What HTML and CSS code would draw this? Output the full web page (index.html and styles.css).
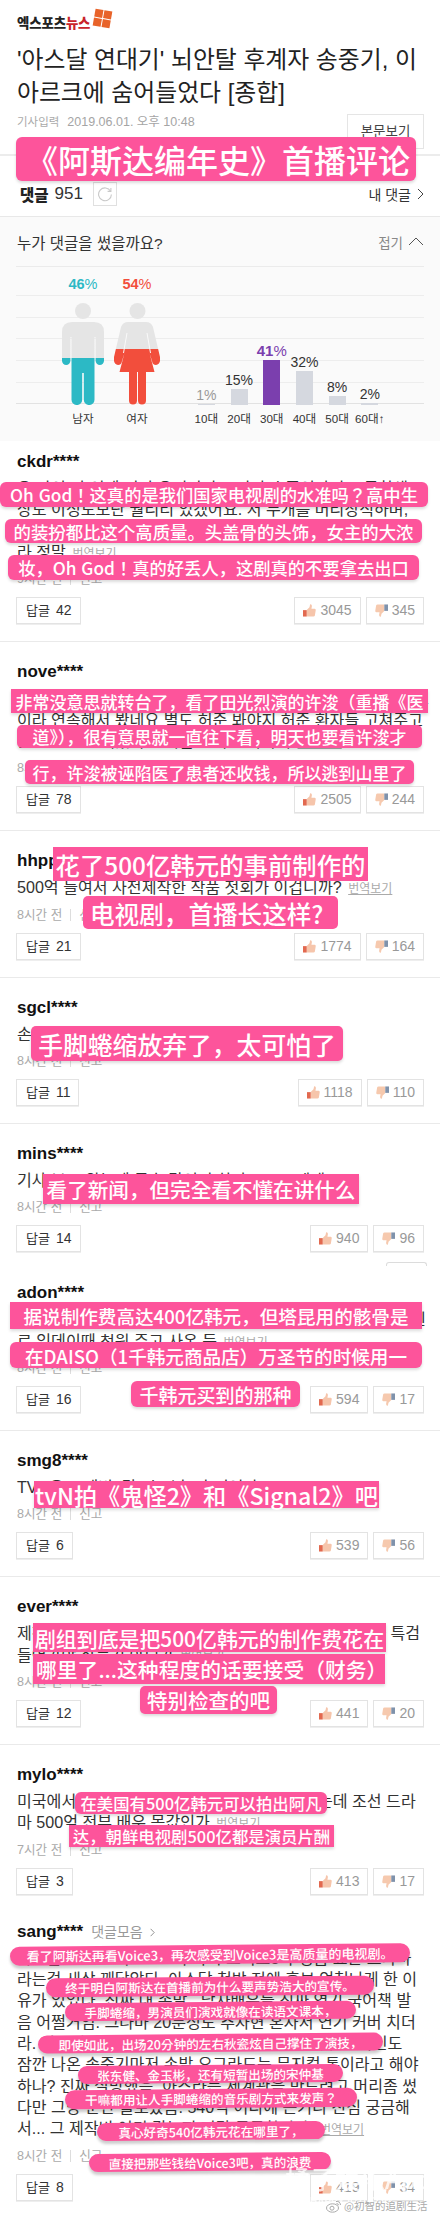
FILE: index.html
```html
<!DOCTYPE html>
<html lang="ko">
<head>
<meta charset="utf-8">
<title>댓글</title>
<link rel="stylesheet" href="styles.css">
</head>
<body>
<svg class="defs" width="0" height="0" aria-hidden="true">
  <defs>
    <linearGradient id="manFill" gradientUnits="userSpaceOnUse" x1="0" y1="0" x2="0" y2="102">
      <stop offset="0.54" stop-color="#e5e5e5"/><stop offset="0.54" stop-color="#2cb9c5"/>
    </linearGradient>
    <linearGradient id="womanFill" gradientUnits="userSpaceOnUse" x1="0" y1="0" x2="0" y2="102">
      <stop offset="0.45" stop-color="#e5e5e5"/><stop offset="0.45" stop-color="#f24e3c"/>
    </linearGradient>
    <symbol id="thumbUp" viewBox="0 0 14 14">
      <path d="M4 6.5 7 3.6 7.7.4Q9.6.2 9.6 2.2L9.1 5H12.6Q14 5.2 13.7 6.6L12.8 12.3Q12.5 13.5 11.3 13.5H4Z" fill="#f6c5ab"/>
      <rect x="0" y="6.6" width="4" height="6.9" fill="#e2694f"/>
    </symbol>
    <symbol id="thumbDown" viewBox="0 0 14 14">
      <path d="M10 7.5 7 10.4 6.3 13.6Q4.4 13.8 4.4 11.8L4.9 9H1.4Q0 8.8.3 7.4L1.2 1.7Q1.5.5 2.7.5H10Z" fill="#f6c9ae"/>
      <rect x="10" y=".5" width="4" height="6.9" fill="#7f92ab"/>
    </symbol>
  </defs>
</svg>
<div class="page">
  <header class="head">
    <div class="logo">
      <span class="logo-text">엑스포츠<em>뉴스</em></span>
      <span class="logo-mark"><i></i><i></i><i></i><i></i></span>
    </div>
    <h1 class="title">'아스달 연대기' 뇌안탈 후계자 송중기, 이<br>아르크에 숨어들었다 [종합]</h1>
    <div class="meta-row">
      <p class="stamp"><span class="stamp-label">기사입력</span><span class="stamp-date">2019.06.01. 오후 10:48</span></p>
      <a class="read-btn">본문보기</a>
    </div>
  </header>

  <div class="tabs">
    <div class="tabs-left">
      <strong>댓글</strong><span class="count">951</span>
      <span class="refresh">
        <svg width="16" height="16" viewBox="0 0 16 16" fill="none" stroke="#c9c9c9" stroke-width="1.1"><path d="M13.6 5.2A6.4 6.4 0 1 0 14.4 8.4"/><path d="M10.6 5.4h3.3V1.9"/></svg>
      </span>
    </div>
    <a class="my-link">내 댓글
      <svg width="7" height="12" viewBox="0 0 7 12" fill="none" stroke="#444" stroke-width="1"><path d="M1 1l5 5-5 5"/></svg>
    </a>
  </div>

  <section class="stats">
    <div class="stats-head">
      <h2>누가 댓글을 썼을까요?</h2>
      <span class="fold">접기
        <svg width="16" height="9" viewBox="0 0 16 9" fill="none" stroke="#555" stroke-width="1"><path d="M1 8l7-7 7 7"/></svg>
      </span>
    </div>
    <div class="chart">
      <div class="grid-lines"><i></i><i></i><i></i><i></i><i></i><i></i></div>
      <div class="genders">
        <div class="gender">
          <p class="g-pct man"><b>46</b>%</p>
          <svg class="fig" width="42" height="102" viewBox="0 0 42 102" fill="url(#manFill)">
            <circle cx="21" cy="8" r="8"/>
            <path d="M10 19H32Q42 19 42 29V34H0V29Q0 19 10 19Z"/>
            <rect x="0" y="30" width="8.4" height="32" rx="4.2"/>
            <rect x="33.6" y="30" width="8.4" height="32" rx="4.2"/>
            <path d="M9.5 30H32.5V96.7a5.3 5.3 0 0 1-10.7 0V70H20.2V96.7a5.3 5.3 0 0 1-10.7 0Z"/>
          </svg>
          <p class="axis">남자</p>
        </div>
        <div class="gender">
          <p class="g-pct woman"><b>54</b>%</p>
          <svg class="fig" width="46" height="102" viewBox="0 0 46 102" fill="url(#womanFill)">
            <circle cx="23.5" cy="8" r="8"/>
            <path d="M14 19H32Q37 19 39 24L46 54Q47 61 42 62Q38.5 62 38 58L35.5 50 40.5 69H5.5L10.5 50 8 58Q7.5 62 4 62-1 61 0 54L7 24Q9 19 14 19Z"/>
            <path d="M15 68H23V97.5a4 4 0 0 1-8 0ZM24 68H32V97.5a4 4 0 0 1-8 0Z"/>
            <path class="fig-gap" d="M13 30 9.5 50M33 30 36.5 50"/>
          </svg>
          <p class="axis">여자</p>
        </div>
      </div>
      <div class="ages">
        <div class="age"><p class="a-pct soft">1%</p><div class="bar" style="height:1px"></div><p class="axis">10대</p></div>
        <div class="age"><p class="a-pct">15%</p><div class="bar" style="height:16px"></div><p class="axis">20대</p></div>
        <div class="age top"><p class="a-pct"><b>41</b>%</p><div class="bar" style="height:45px"></div><p class="axis">30대</p></div>
        <div class="age"><p class="a-pct">32%</p><div class="bar" style="height:34px"></div><p class="axis">40대</p></div>
        <div class="age"><p class="a-pct">8%</p><div class="bar" style="height:9px"></div><p class="axis">50대</p></div>
        <div class="age"><p class="a-pct">2%</p><div class="bar" style="height:2px"></div><p class="axis">60대↑</p></div>
      </div>
    </div>
  </section>

  <article class="comment first">
    <p class="name">ckdr<span>****</span></p>
    <p class="body">오 마이 갓 이게 진짜 우리나라 드라마 수준이라니 고등학생<br>상도 이정도보단 퀄리티 있겠어요. 저 누개를 머리장식하며,<br>여주 진한 화장이며 오 마이 갓 진짜 창피해요 이 드라마 수출<br>라 정말 <a class="tr">번역보기</a></p>
    <p class="when">9시간 전<i></i>신고</p>
    <div class="actions">
      <a class="reply">답글<span>42</span></a>
      <div class="votes">
        <a class="vote"><svg width="13" height="13"><use href="#thumbUp"/></svg>3045</a>
        <a class="vote"><svg width="13" height="13"><use href="#thumbDown"/></svg>345</a>
      </div>
    </div>
  </article>

  <article class="comment">
    <p class="name">nove<span>****</span></p>
    <p class="body">재미없어서 돌렸더니 전광렬 나오는 허준 재방송을 하더라구요<br>이라 연속해서 봤네요 별도 허준 봐야지 허준 환자들 고쳐주고<br>돈도 안받고 재밌어요 내일도 허준 봐야지 <a class="tr">번역보기</a></p>
    <p class="when">8시간 전<i></i>신고</p>
    <div class="actions">
      <a class="reply">답글<span>78</span></a>
      <div class="votes">
        <a class="vote"><svg width="13" height="13"><use href="#thumbUp"/></svg>2505</a>
        <a class="vote"><svg width="13" height="13"><use href="#thumbDown"/></svg>244</a>
      </div>
    </div>
  </article>

  <article class="comment">
    <p class="name">hhpp<span>****</span></p>
    <p class="body">500억 들여서 사전제작한 작품 첫회가 이겁니까? <a class="tr">번역보기</a></p>
    <p class="when">8시간 전<i></i>신고</p>
    <div class="actions">
      <a class="reply">답글<span>21</span></a>
      <div class="votes">
        <a class="vote"><svg width="13" height="13"><use href="#thumbUp"/></svg>1774</a>
        <a class="vote"><svg width="13" height="13"><use href="#thumbDown"/></svg>164</a>
      </div>
    </div>
  </article>

  <article class="comment">
    <p class="name">sgcl<span>****</span></p>
    <p class="body">손발이 오그라들어서 포기했어요 무섭다</p>
    <p class="when">8시간 전<i></i>신고</p>
    <div class="actions">
      <a class="reply">답글<span>11</span></a>
      <div class="votes">
        <a class="vote"><svg width="13" height="13"><use href="#thumbUp"/></svg>1118</a>
        <a class="vote"><svg width="13" height="13"><use href="#thumbDown"/></svg>110</a>
      </div>
    </div>
  </article>

  <article class="comment bare">
    <p class="name">mins<span>****</span></p>
    <p class="body">기사 보고 왔는데 무슨 말인지 하나도 모르겠네</p>
    <p class="when">8시간 전<i></i>신고</p>
    <div class="actions">
      <a class="reply">답글<span>14</span></a>
      <div class="votes">
        <a class="vote"><svg width="13" height="13"><use href="#thumbUp"/></svg>940</a>
        <a class="vote"><svg width="13" height="13"><use href="#thumbDown"/></svg>96</a>
      </div>
    </div>
  </article>

  <article class="comment tight-a">
    <p class="name">adon<span>****</span></p>
    <p class="body">제작비 400억이라더니 타곤이 쓰는 해골이 다이소에서 할로윈<br>로 임데이때 천원 주고 사온 듯 <a class="tr">번역보기</a></p>
    <p class="when">8시간 전<i></i>신고</p>
    <div class="actions">
      <a class="reply">답글<span>16</span></a>
      <div class="votes">
        <a class="vote"><svg width="13" height="13"><use href="#thumbUp"/></svg>594</a>
        <a class="vote"><svg width="13" height="13"><use href="#thumbDown"/></svg>17</a>
      </div>
    </div>
  </article>

  <article class="comment">
    <p class="name">smg8<span>****</span></p>
    <p class="body">TVN은 도깨비2랑 시그널2나 찍어라</p>
    <p class="when">8시간 전<i></i>신고</p>
    <div class="actions">
      <a class="reply">답글<span>6</span></a>
      <div class="votes">
        <a class="vote"><svg width="13" height="13"><use href="#thumbUp"/></svg>539</a>
        <a class="vote"><svg width="13" height="13"><use href="#thumbDown"/></svg>56</a>
      </div>
    </div>
  </article>

  <article class="comment">
    <p class="name">ever<span>****</span></p>
    <p class="body">제작비 500억 도대체 어디다 쓴건지 이정도면 재무 조사 특검<br>들어가야 하는거 아닌가 <a class="tr">번역보기</a></p>
    <p class="when">8시간 전<i></i>신고</p>
    <div class="actions">
      <a class="reply">답글<span>12</span></a>
      <div class="votes">
        <a class="vote"><svg width="13" height="13"><use href="#thumbUp"/></svg>441</a>
        <a class="vote"><svg width="13" height="13"><use href="#thumbDown"/></svg>20</a>
      </div>
    </div>
  </article>

  <article class="comment bare">
    <p class="name">mylo<span>****</span></p>
    <p class="body">미국에서는 500억이면 아바타 같은 영화를 찍는데 조선 드라<br>마 500억 전부 배우 몸값인가 <a class="tr">번역보기</a></p>
    <p class="when">7시간 전<i></i>신고</p>
    <div class="actions">
      <a class="reply">답글<span>3</span></a>
      <div class="votes">
        <a class="vote"><svg width="13" height="13"><use href="#thumbUp"/></svg>413</a>
        <a class="vote"><svg width="13" height="13"><use href="#thumbDown"/></svg>17</a>
      </div>
    </div>
  </article>

  <article class="comment bare tight-b">
    <p class="name">sang<span>****</span><a class="collect">댓글모음
      <svg width="5" height="9" viewBox="0 0 5 9" fill="none" stroke="#888" stroke-width=".9"><path d="M.6.8l3.6 3.7L.6 8.2"/></svg></a></p>
    <p class="body">아스달 보고 보이스3 보니 다시 보이스3가 명품 표본 드라마<br>라는걸 새삼 깨달았다. 아스달 첫방 전에 홍보 엄청나게 한 이<br>유가 있었다. 진짜 내 손발.. 남자배우들 진짜 연기 국어책 발<br>음 어쩔거임. 그나마 20분정도 추자현 혼자서 연기 커버 치더<br>라. 장동건과 김옥빈, 그리고 아주 잠깐 나온 배우 김옥빈도<br>잠깐 나온 송중기마저 손발 오그라드는 뮤지컬 톤이라고 해야<br>하나? 진짜 실망했음. 아스라는 세계관을 만드려고 머리좀 썼<br>다만 그냥 눈만 돌로봤음. 540억 어디에 쓴거니 진심 궁금해<br>서... 그 제작비 어디 갔는지 정말 궁금합니다. <a class="tr">번역보기</a></p>
    <p class="when">8시간 전<i></i>신고</p>
    <div class="actions">
      <a class="reply">답글<span>8</span></a>
      <div class="votes">
        <a class="vote"><svg width="13" height="13"><use href="#thumbUp"/></svg>419</a>
        <a class="vote"><svg width="13" height="13"><use href="#thumbDown"/></svg>34</a>
      </div>
    </div>
  </article>

  <div class="stub"></div>

  <p class="cap c0">《阿斯达编年史》首播评论</p>
  <p class="cap c1">Oh God！这真的是我们国家电视剧的水准吗？高中生</p>
  <p class="cap c2">的装扮都比这个高质量。头盖骨的头饰，女主的大浓</p>
  <p class="cap c3">妆，Oh God！真的好丢人，这剧真的不要拿去出口</p>
  <p class="cap c4">非常没意思就转台了，看了田光烈演的许浚（重播《医</p>
  <p class="cap c5">道》），很有意思就一直往下看，明天也要看许浚才</p>
  <p class="cap c6">行，许浚被诬陷医了患者还收钱，所以逃到山里了</p>
  <p class="cap c7">花了500亿韩元的事前制作的</p>
  <p class="cap c8">电视剧，首播长这样?</p>
  <p class="cap c9">手脚蜷缩放弃了，太可怕了</p>
  <p class="cap c10">看了新闻，但完全看不懂在讲什么</p>
  <p class="cap c11">据说制作费高达400亿韩元，但塔昆用的骸骨是</p>
  <p class="cap c12">在DAISO（1千韩元商品店）万圣节的时候用一</p>
  <p class="cap c13">千韩元买到的那种</p>
  <p class="cap c14">tvN拍《鬼怪2》和《Signal2》吧</p>
  <p class="cap c15">剧组到底是把500亿韩元的制作费花在</p>
  <p class="cap c16">哪里了...这种程度的话要接受（财务）</p>
  <p class="cap c17">特别检查的吧</p>
  <p class="cap c18">在美国有500亿韩元可以拍出阿凡</p>
  <p class="cap c19">达，朝鲜电视剧500亿都是演员片酬</p>
  <p class="cap pill c20">看了阿斯达再看Voice3，再次感受到Voice3是高质量的电视剧。</p>
  <p class="cap pill c21">终于明白阿斯达在首播前为什么要声势浩大的宣传。</p>
  <p class="cap pill c22">手脚蜷缩，男演员们演戏就像在读语文课本，</p>
  <p class="cap pill c23">即使如此，出场20分钟的左右秋瓷炫自己撑住了演技，</p>
  <p class="cap pill c24">张东健、金玉彬，还有短暂出场的宋仲基</p>
  <p class="cap pill c25">干嘛都用让人手脚蜷缩的音乐剧方式来发声？</p>
  <p class="cap pill c26">真心好奇540亿韩元花在哪里了，</p>
  <p class="cap pill c27">直接把那些钱给Voice3吧，真的浪费</p>

  <div class="mark">
    <p class="mark-big">橘子娱乐App</p>
    <p class="mark-site">HAPPYJUZI.COM</p>
  </div>
  <p class="weibo">
    <svg width="16" height="13" viewBox="0 0 16 13" fill="none" stroke="#aaa" stroke-width="1"><ellipse cx="6.5" cy="8" rx="6" ry="4.2"/><circle cx="6" cy="8.2" r="2"/><path d="M10 1.5q4-.6 4.5 3.5M10.5 3.6q1.8-.2 2 1.6"/></svg>@初智的追剧生活
  </p>
</div>
</body>
</html>
```

FILE: styles.css
```css
* { box-sizing: border-box; }
html, body { margin: 0; padding: 0; background: #fff; }
p, h1, h2 { margin: 0; font-weight: normal; }
a { color: inherit; text-decoration: none; }
.defs { position: absolute; }

.page {
  position: relative;
  width: 440px;
  height: 2217px;
  overflow: hidden;
  background: #fff;
  color: #222;
  font-family: "Liberation Sans", "Noto Sans CJK KR", sans-serif;
}

/* header */
.head { padding: 10px 16px 5px 17px; border-bottom: 2px solid #ececec; }
.logo { height: 24px; display: flex; align-items: flex-start; gap: 4px; }
.logo-text {
  margin-top: 5px;
  font-size: 13.4px;
  line-height: 18px;
  font-weight: 900;
  color: #222;
  letter-spacing: -.1px;
}
.logo-text em { font-style: normal; color: #c9242b; }
.logo-mark {
  width: 17px;
  height: 17px;
  display: grid;
  grid-template-columns: 1fr 1fr;
  gap: 1.5px;
  transform: rotate(10deg);
}
.logo-mark i { background: #e8632a; }
.title {
  margin-top: 9px;
  font-size: 23.85px;
  line-height: 33px;
  color: #222;
  white-space: nowrap;
}
.meta-row {
  height: 35px;
  display: flex;
  justify-content: space-between;
  align-items: flex-start;
  margin-top: 5px;
}
.stamp { line-height: 16px; color: #aaa; display: flex; gap: 8px; }
.stamp-label { font-size: 11.5px; }
.stamp-date { font-size: 12.5px; color: #a5a5a5; }
.read-btn {
  width: 77px;
  height: 35px;
  border: 1px solid #e5e5e5;
  text-align: center;
  font-size: 13.5px;
  line-height: 33px;
  color: #444;
}

/* tabs */
.tabs {
  height: 61px;
  padding: 26px 16px 0 20px;
  display: flex;
  justify-content: space-between;
  align-items: flex-start;
  border-bottom: 1px solid #e8e8e8;
}
.tabs-left { display: flex; align-items: center; height: 24px; }
.tabs-left strong { font-size: 15.5px; font-weight: 900; }
.count { margin-left: 6px; font-size: 17px; color: #333; }
.refresh {
  margin-left: 10px;
  width: 24px;
  height: 24px;
  border: 1px solid #e0e0e0;
  display: flex;
  align-items: center;
  justify-content: center;
}
.my-link { display: flex; align-items: center; gap: 6px; height: 24px; font-size: 14px; color: #333; }

/* stats */
.stats { background: #fafafa; padding: 0 16px; height: 224px; }
.stats-head { height: 49px; display: flex; justify-content: space-between; align-items: center; }
.stats-head h2 { font-size: 15.5px; color: #333; padding-left: 1px; }
.fold { display: flex; align-items: center; gap: 5px; font-size: 13.5px; color: #888; }
.chart { position: relative; display: flex; }
.grid-lines {
  position: absolute;
  left: 0; right: 0; top: 0;
  height: 139px;
  border-top: 1px solid #ebebeb;
  display: flex;
  flex-direction: column;
  padding-top: 28px;
  gap: 20.7px;
}
.grid-lines i { display: block; height: 1px; background: #ededed; }
.grid-lines i:last-child { background: #e2e2e2; }
.genders { position: relative; display: flex; margin-left: 40px; width: 108px; }
.gender { width: 54px; height: 167px; display: flex; flex-direction: column; align-items: center; justify-content: flex-end; }
.g-pct { font-size: 14.5px; line-height: 18px; margin-bottom: 10px; }
.g-pct b { font-weight: bold; }
.man { color: #2cb9c5; }
.woman { color: #f24e3c; }
.fig { display: block; }
.fig-gap { fill: none; stroke: #fafafa; stroke-width: 1; }
.axis { height: 28px; line-height: 28px; font-size: 11.6px; color: #333; white-space: nowrap; }
.ages { position: relative; display: flex; margin-left: 26px; }
.age { width: 32.7px; height: 167px; display: flex; flex-direction: column; align-items: center; justify-content: flex-end; }
.a-pct { font-size: 14px; line-height: 16px; margin-bottom: 1px; color: #333; white-space: nowrap; }
.a-pct.soft { color: #999; }
.bar { width: 17px; background: #d5d8df; flex: none; }
.age.top .bar { background: #7b3fae; }
.age.top .a-pct { color: #7b3fae; font-size: 15px; }

/* comments */
.comment { padding: 20px 16px 17px 17px; border-bottom: 1px solid #eaeaea; }
.comment.first { padding-top: 11px; }
.comment.bare { border-bottom-color: transparent; }
.comment.tight-a { padding-top: 13px; }
.comment.tight-b { padding-top: 9px; }
.name { height: 20px; line-height: 20px; font-size: 17px; font-weight: bold; color: #111; white-space: nowrap; }
.collect { margin-left: 8px; font-size: 14px; font-weight: normal; color: #999; }
.collect svg { margin-left: 3px; }
.body {
  margin-top: 6px;
  font-size: 16.1px;
  line-height: 21.33px;
  color: #333;
  white-space: nowrap;
}
.tr { margin-left: 2px; font-size: 12px; line-height: 1; color: #aaa; text-decoration: underline; }
.when { margin-top: 8px; height: 16px; line-height: 16px; font-size: 12.6px; color: #aaa; display: flex; align-items: center; }
.when i { width: 1px; height: 12px; margin: 0 8px; background: #ddd; }
.actions { margin-top: 10px; margin-left: -1px; display: flex; justify-content: space-between; }
.reply, .vote {
  height: 27px;
  border: 1px solid #e3e3e3;
  box-shadow: 0 1px 0 #eee;
  background: #fff;
  display: flex;
  align-items: center;
  line-height: 25px;
  white-space: nowrap;
}
.reply { padding: 0 8px 0 9px; font-size: 13px; color: #333; gap: 6px; }
.reply span { font-size: 14px; }
.votes { display: flex; gap: 5px; }
.vote { padding: 0 8px; gap: 4px; font-size: 14px; color: #999; }

/* leftover box edge */
.stub {
  position: absolute;
  left: 386px; top: 1262px;
  width: 41px; height: 4px;
  border: 1px solid #dcdcdc;
  border-bottom: 0;
  border-radius: 3px 3px 0 0;
}

/* captions */
.cap {
  position: absolute;
  display: flex;
  align-items: center;
  justify-content: center;
  background: #fd549b;
  color: #fff;
  font-family: "Noto Sans CJK SC", sans-serif;
  font-weight: 500;
  white-space: nowrap;
  box-shadow: 0 2px 3px rgba(0, 0, 0, .14);
}
.c0  { left: 16px;  top: 137px;  width: 400px; height: 44px; border-radius: 6px; font-size: 32px; padding-left: 4px; }
.c1  { left: 0;     top: 482px;  width: 428px; height: 25px; border-radius: 6px; font-size: 17.3px; }
.c2  { left: 5px;   top: 519px;  width: 417px; height: 24px; border-radius: 6px; font-size: 17.4px; }
.c3  { left: 8px;   top: 555px;  width: 411px; height: 25px; border-radius: 6px; font-size: 17.3px; }
.c4  { left: 11px;  top: 689px;  width: 417px; height: 24px; font-size: 17px; }
.c5  { left: 17px;  top: 725px;  width: 405px; height: 23px; border-radius: 5px; font-size: 17px; }
.c6  { left: 25px;  top: 760px;  width: 389px; height: 24px; border-radius: 5px; font-size: 17px; }
.c7  { left: 53px;  top: 847px;  width: 315px; height: 34px; font-size: 24.4px; box-shadow: none; }
.c8  { left: 83px;  top: 896px;  width: 255px; height: 33px; border-radius: 5px; font-size: 24.6px; justify-content: flex-start; padding-left: 7px; box-shadow: none; }
.c9  { left: 31px;  top: 1026px; width: 312px; height: 35px; border-radius: 5px; font-size: 24.8px; }
.c10 { left: 43px;  top: 1174px; width: 316px; height: 30px; font-size: 20.6px; }
.c11 { left: 10px;  top: 1302px; width: 412px; height: 27px; font-size: 18.6px; }
.c12 { left: 10px;  top: 1342px; width: 412px; height: 26px; border-radius: 6px; font-size: 18.6px; }
.c13 { left: 131px; top: 1381px; width: 169px; height: 26px; border-radius: 6px; font-size: 19px; }
.c14 { left: 34px;  top: 1481px; width: 345px; height: 27px; font-size: 23.2px; }
.c15 { left: 33px;  top: 1623px; width: 353px; height: 29px; font-size: 20.9px; }
.c16 { left: 33px;  top: 1654px; width: 352px; height: 30px; font-size: 20.8px; justify-content: flex-start; padding-left: 3px; }
.c17 { left: 140px; top: 1686px; width: 137px; height: 28px; border-radius: 5px; font-size: 20.5px; }
.c18 { left: 75px;  top: 1792px; width: 252px; height: 22px; border-radius: 6px; font-size: 16.4px; }
.c19 { left: 69px;  top: 1825px; width: 265px; height: 22px; font-size: 16.4px; }

.pill {
  border-radius: 11px;
  transform: rotate(-.5deg);
  box-shadow: 0 3px 3px rgba(0, 0, 0, .2);
  font-size: 12.6px;
}
.c20 { left: 10px; top: 1945px; width: 400px; height: 19px; font-size: 13px; }
.c21 { left: 46px; top: 1977px; width: 328px; height: 19px; }
.c22 { left: 65px; top: 2002px; width: 291px; height: 18px; }
.c23 { left: 38px; top: 2034px; width: 345px; height: 18px; }
.c24 { left: 78px; top: 2065px; width: 265px; height: 18px; }
.c25 { left: 65px; top: 2089px; width: 292px; height: 19px; }
.c26 { left: 97px; top: 2122px; width: 228px; height: 18px; }
.c27 { left: 89px; top: 2153px; width: 242px; height: 18px; }

/* watermark */
.mark { position: absolute; left: 285px; top: 2160px; width: 145px; color: rgba(255, 255, 255, .8); font-family: "Noto Sans CJK SC", sans-serif; filter: blur(.4px); }
.mark-big { font-size: 25px; line-height: 36px; white-space: nowrap; font-weight: 500; }
.mark-site { font-size: 10px; line-height: 12px; margin-left: 25px; font-family: "Liberation Sans", sans-serif; font-weight: bold; }
.weibo {
  position: absolute;
  left: 326px; top: 2198px;
  display: flex;
  align-items: center;
  gap: 2px;
  font-family: "Noto Sans CJK SC", sans-serif;
  font-size: 10.5px;
  line-height: 16px;
  color: #aaa;
  white-space: nowrap;
}
```
